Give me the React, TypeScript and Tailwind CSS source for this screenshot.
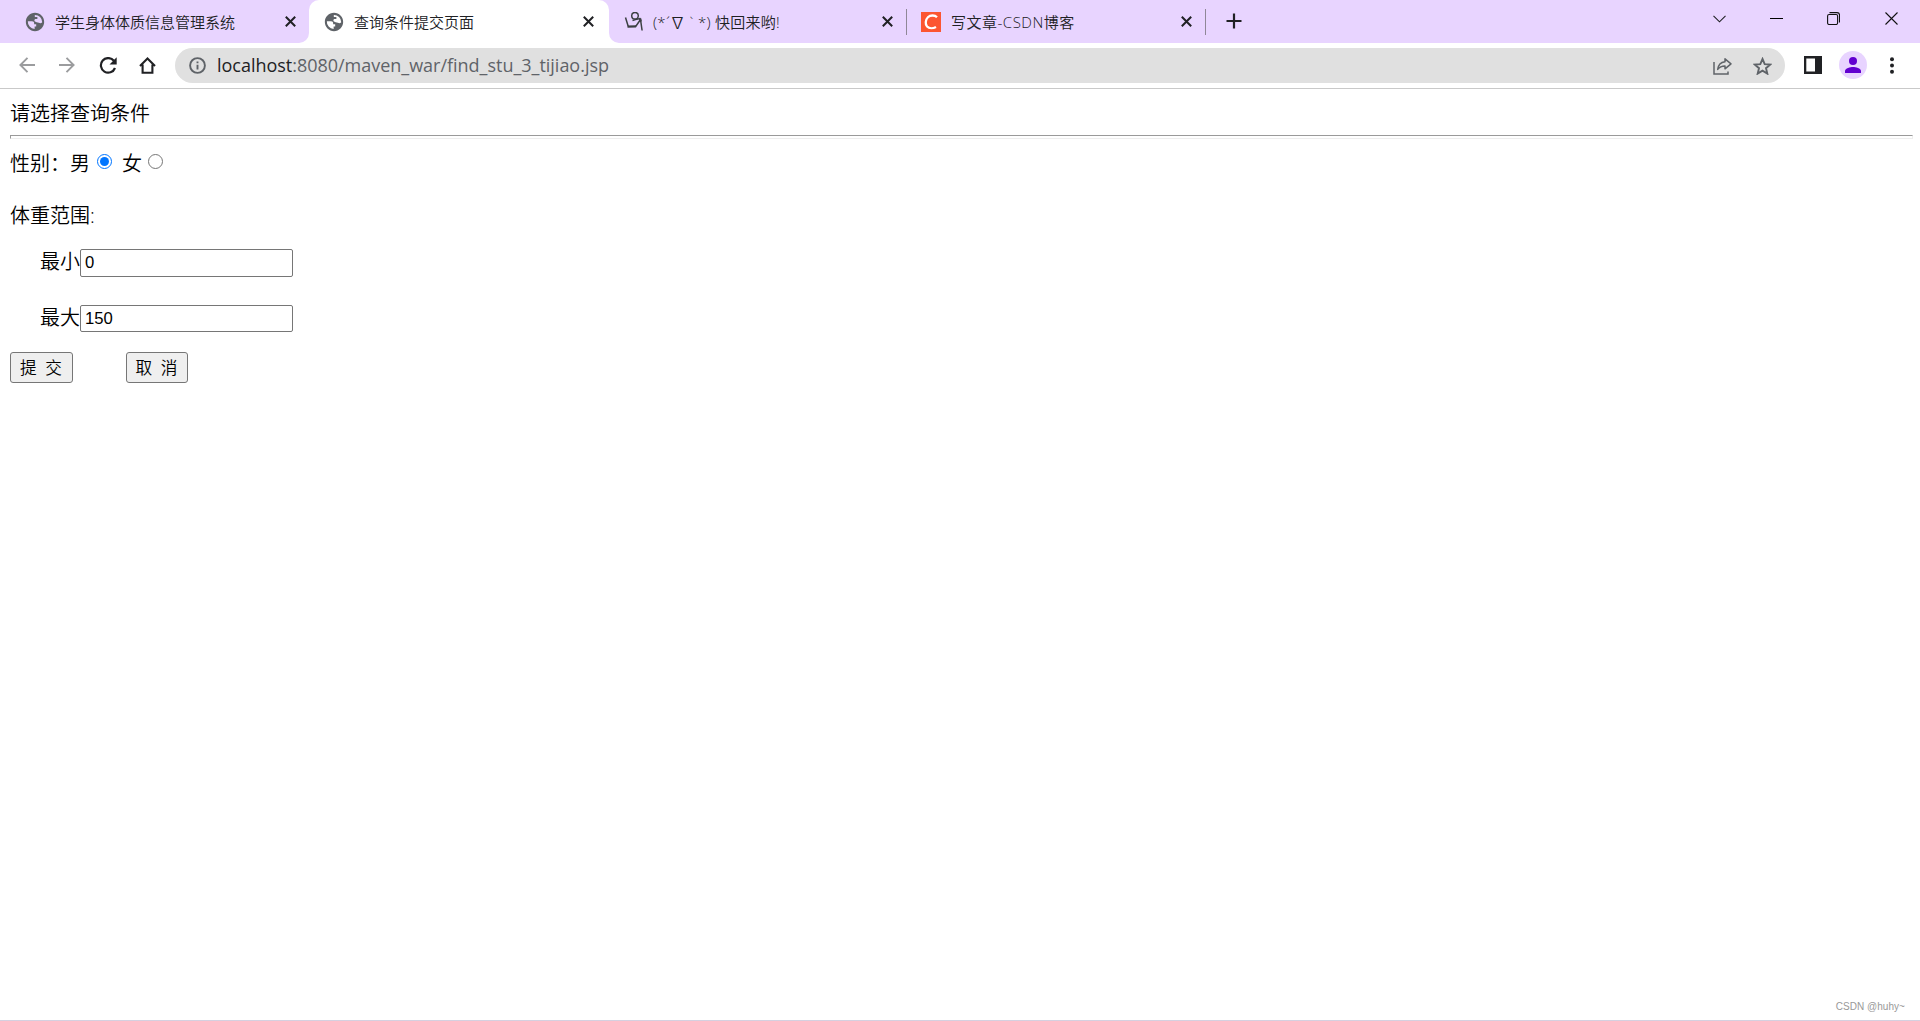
import React, { useState } from "react";

const CJK = "font-[350] font-['Open_Sans','Noto_Sans_CJK_SC',sans-serif]";

function Globe() {
  return (
    <svg className="size-[22px] shrink-0" viewBox="0 0 24 24" fill="#5f6368">
      <path d="M12 2C6.48 2 2 6.48 2 12s4.480 10 10 10 10-4.480 10-10S17.520 2 12 2zM4.200 11.300h4.600c1.500 0 2.300 1 2.300 2.200v1h2.200v2.400h-1.700v2.800A7.900 7.900 0 0 1 4.200 11.300zm15.700.9c-1.200 1.600-2.600 1.200-3.700.6-1.200-.8-3.700-.6-4.600-1.700-.5-.8-.3-2 .6-2.400h2.400V6.600h-2.800V4.300a7.900 7.900 0 0 1 8.100 7.900z" />
    </svg>
  );
}

function Close() {
  return (
    <svg className="size-[11px] shrink-0" viewBox="0 0 11 11" stroke="#202124" strokeWidth="2">
      <path d="M.8.8l9.400 9.400M10.200.8L.8 10.200" />
    </svg>
  );
}

function Doodle() {
  return (
    <svg className="size-5 shrink-0" viewBox="0 0 20 20" fill="none" stroke="#3c4043" strokeWidth="1.500">
      <circle cx="11" cy="3.800" r="3.300" />
      <path d="M1.500 5.500l2.700 8.700M11.500 14.700l5-7.200 1.600 11M8.500 8.500l3-.9 4.500-1.100" />
      <path d="M3.500 14.600l8.500-.2" strokeWidth="2.200" />
      <path d="M16 6.500l.8 3" strokeWidth="2.200" />
    </svg>
  );
}

function Csdn() {
  return (
    <svg className="size-5 shrink-0" viewBox="0 0 20 20">
      <path fill="#fc5531" d="M0 0h20v20H0z" />
      <path d="M16 5.200C13.800 3 9.400 2.800 6.900 5.300c-2.500 2.600-2.900 6.900-.8 9.200 2.100 2.200 6 2 8.900.4" fill="none" stroke="#fff" strokeWidth="2.300" />
    </svg>
  );
}

function Tab({ icon, title, className, text = "" }: { icon: React.ReactNode; title: string; className: string; text?: string }) {
  return (
    <div className={`flex h-[43px] shrink-0 items-center ${className}`}>
      {icon}
      <span className={`flex-1 whitespace-pre text-[15px] leading-5 text-[#202124] ${text}`}>{title}</span>
      <Close />
    </div>
  );
}

function TabStrip() {
  return (
    <div className="flex h-[43px] bg-[#e8d4ff]">
      <Tab className="w-[309px] pl-6 pr-[13px]" icon={<Globe />} title="学生身体体质信息管理系统" text="ml-[9px]" />
      <div className="-mx-[10px] flex h-[43px] w-[320px] items-end">
        <svg className="size-[10px] shrink-0" viewBox="0 0 10 10"><path d="M10 0v10H0A10 10 0 0 0 10 0" fill="#fff" /></svg>
        <Tab className="w-[300px] rounded-t-[10px] bg-white pl-[14px] pr-[15px]" icon={<Globe />} title="查询条件提交页面" text="ml-[9px]" />
        <svg className="size-[10px] shrink-0" viewBox="0 0 10 10"><path d="M0 0v10h10A10 10 0 0 1 0 0" fill="#fff" /></svg>
      </div>
      <Tab className="w-[297px] pl-[15px] pr-[13px]" icon={<Doodle />} title="(*´∇ ` *) 快回来哟!" text="ml-[9px] tracking-[0.28px]" />
      <div className="mt-[9px] h-[26px] w-px bg-[#8f8797]" />
      <Tab className="w-[298px] pl-[14px] pr-[13px]" icon={<Csdn />} title="写文章-CSDN博客" text="ml-[10px] tracking-[0.5px]" />
      <div className="mt-[9px] h-[26px] w-px bg-[#8f8797]" />
      <svg className="ml-[20px] mt-[13px] size-4" viewBox="0 0 16 16" stroke="#202124" strokeWidth="2.200"><path d="M8 .5v15M.5 8h15" /></svg>
      <div className="ml-auto flex h-[37px] items-center pr-[22px]">
        <svg className="mr-[44px] h-[8px] w-[13px]" viewBox="0 0 13 8" fill="none" stroke="#202124" strokeWidth="1.100"><path d="M.5.8l6 6 6-6" /></svg>
        <div className="mr-[44px] h-px w-[13px] bg-black" />
        <svg className="mr-[45px] size-[13px]" viewBox="0 0 13 13" fill="none" stroke="#111" strokeWidth="1.100"><rect x=".6" y="2.500" width="10" height="10" rx="1.500" /><path d="M2.500.6h7.500a2.500 2.500 0 0 1 2.500 2.500v7.500" /></svg>
        <svg className="size-[13px]" viewBox="0 0 13 13" stroke="#111" strokeWidth="1.100"><path d="M.5.5l12 12M12.500.5l-12 12" /></svg>
      </div>
    </div>
  );
}

function Toolbar() {
  return (
    <div className="flex h-[46px] items-center border-b border-[#c9c9c9] bg-white pb-px pl-[19px]">
      <svg className="mr-[24px] size-4" viewBox="0 0 16 16" fill="none" stroke="#9b9c9e" strokeWidth="1.900"><path d="M16 8H1.500M8.500.8L1.400 8l7.100 7.200" /></svg>
      <svg className="mr-[24px] size-4" viewBox="0 0 16 16" fill="none" stroke="#9b9c9e" strokeWidth="1.900"><path d="M0 8h14.500M7.500.8L14.600 8l-7.100 7.200" /></svg>
      <svg className="mr-[22px] h-[17px] w-[18px]" viewBox="0 0 18 17" fill="none" stroke="#202124" strokeWidth="2.200"><path d="M14.900 3.800A7.300 7.300 0 1 0 16 11" /><path d="M17.700.3v7.200h-7.200z" fill="#202124" stroke="none" /></svg>
      <svg className="mr-[19px] h-[17px] w-[17px]" viewBox="0 0 17 17" fill="none" stroke="#202124" strokeWidth="2.100"><path d="M1 9L8.500 1.500 16 9M3.600 7.500v8.200h9.800V7.500" /></svg>
      <div className="mt-px flex h-[35px] w-[1610px] shrink-0 items-center rounded-full bg-[#e0e0e0] pl-[14px] pr-[13px]">
        <svg className="size-[17px] shrink-0" viewBox="0 0 17 17" fill="none" stroke="#5f6368" strokeWidth="1.900"><circle cx="8.500" cy="8.500" r="7.400" /><path d="M8.500 7.700v4.700M8.500 4.400v1.900" /></svg>
        <span className="mb-[2px] ml-[11px] flex-1 whitespace-nowrap font-['Open_Sans','Noto_Sans',sans-serif] text-[18px] font-normal leading-6 tracking-[-0.020px] text-[#5f6368]">
          <span className="text-[#202124]">localhost</span>:8080/maven_war/find_stu_3_tijiao.jsp
        </span>
        <svg className="mr-[20px] h-[18px] w-[20px]" viewBox="0 0 20 18" fill="none" stroke="#5f6368" strokeWidth="1.500"><path d="M1 5v12h14v-2.500" /><path d="M12 1.800l6 5-6 5V8.900c-3.500 0-5.600 1-7.300 3.500C5.200 8 7.800 5.200 12 4.700z" strokeLinejoin="round" /></svg>
        <svg className="h-[18px] w-[19px]" viewBox="0 0 19 18" fill="none" stroke="#5f6368" strokeWidth="1.900"><path d="M9.500 2l2.200 5.100 5.500.5-4.200 3.600 1.300 5.400-4.800-2.900-4.800 2.900L6 11.200 1.800 7.600l5.500-.5z" /></svg>
      </div>
      <svg className="ml-[19px] h-[18px] w-[18px]" viewBox="0 0 18 18"><path d="M0 0h18v18H0z" fill="#202124" /><path d="M2.300 2.500h8.700v13H2.300z" fill="#fff" /></svg>
      <div className="ml-[17px] flex size-7 items-center justify-center rounded-full bg-[#e8d4ff]">
        <svg className="h-4 w-4" viewBox="0 0 16 16" fill="#6200d0"><circle cx="8" cy="4" r="4" /><path d="M0 16v-2c0-2.700 5.300-4 8-4s8 1.300 8 4v2z" /></svg>
      </div>
      <svg className="ml-[23px] h-[17px] w-1" viewBox="0 0 4 17" fill="#202124"><circle cx="2" cy="2.200" r="2" /><circle cx="2" cy="8.500" r="2" /><circle cx="2" cy="14.800" r="2" /></svg>
    </div>
  );
}

function Radio({ checked, onClick, className }: { checked: boolean; onClick: () => void; className: string }) {
  return (
    <button type="button" role="radio" aria-checked={checked} onClick={onClick} className={`flex size-[15px] items-center justify-center rounded-full border bg-white ${checked ? "border-[#0075ff]" : "border-[#767676]"} ${className}`}>
      {checked && <span className="size-[9px] rounded-full bg-[#0075ff]" />}
    </button>
  );
}

const button = "h-[31px] rounded-[3px] border border-[#767676] bg-[#efefef] text-[16.670px] leading-none whitespace-pre pt-px pr-px";
const field = "w-[213px] rounded-[2px] border border-[#767676] bg-white px-1 font-['Liberation_Sans',sans-serif] text-[16.670px] outline-none";

export default function App() {
  const [male, setMale] = useState(true);
  return (
    <div className={`flex h-[1021px] w-[1920px] flex-col overflow-hidden bg-white text-black ${CJK}`}>
      <TabStrip />
      <Toolbar />
      <main className="flex flex-1 flex-col items-start border-b border-[#d5d0e0] pl-[10px] text-[20px] leading-[26px]">
        <div className="mt-[12px]">请选择查询条件</div>
        <div className="mt-[8px] h-[4px] w-[1903px] border border-b-[#eee] border-l-[#9a9a9a] border-r-[#eee] border-t-[#9a9a9a]" />
        <div className="mt-[12px] flex items-center">
          <span>性别：男</span>
          <Radio className="mb-[5px] ml-[7px]" checked={male} onClick={() => setMale(true)} />
          <span className="ml-[10px]">女</span>
          <Radio className="mb-[5px] ml-[6px]" checked={!male} onClick={() => setMale(false)} />
        </div>
        <div className="mt-[26px]">体重范围:</div>
        <label className="ml-[30px] mt-[20px] flex h-7"><span>最小</span><input className={`h-7 ${field}`} defaultValue="0" /></label>
        <label className="ml-[30px] mt-[28px] flex h-[27px]"><span>最大</span><input className={`h-[27px] ${field}`} defaultValue="150" /></label>
        <div className="mt-5 flex gap-[53px]">
          <button className={`w-[63px] ${button}`}>{"提  交"}</button>
          <button className={`w-[62px] ${button}`}>{"取  消"}</button>
        </div>
        <div className="mb-[5px] mr-[15px] mt-auto self-end font-['Liberation_Sans',sans-serif] text-[10px] leading-4 tracking-[0.050px] text-[#999]">CSDN @huhy~</div>
      </main>
    </div>
  );
}
